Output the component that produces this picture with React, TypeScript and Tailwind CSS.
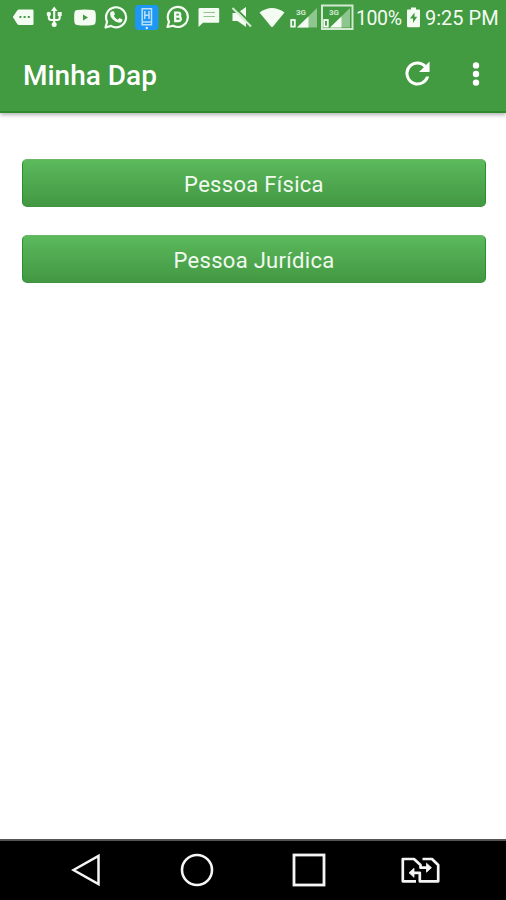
import type { ReactNode } from "react"

interface GlyphProps {
  box: string
  className: string
  children: ReactNode
}

// Every status glyph is drawn on a 36px tall strip, so they share one baseline
function Glyph({ box, className, children }: GlyphProps) {
  return (
    <svg viewBox={box} fill="currentColor" className={`h-9 shrink-0 ${className}`}>
      {children}
    </svg>
  )
}

function StatusBar() {
  return (
    <div className="flex h-9 items-center pl-3 text-[#f4fbf2]">
      {/* Label */}
      <Glyph box="0 0 22 36" className="w-[22px]">
        <path fillRule="evenodd" d="M7 9.5h13.5q1 0 1 1v13.500q0 1-1 1H7q-1 0-1.600-.8L.8 17l4.600-6.700Q6 9.500 7 9.500Zm.400 6.500v2h2v-2Zm4.200 0v2h2v-2Zm4.200 0v2h2v-2Z" />
      </Glyph>
      {/* USB */}
      <Glyph box="0 0 17 36" className="ml-3 w-[17px]">
        <path d="M8.200 6.500 11.500 11H4.900Z" />
        <path d="M8.200 10v15M2.800 14v3.500q0 2.500 2.500 2.500h5.900q2.500 0 2.500-2.500V14" fill="none" stroke="currentColor" strokeWidth="2.100" />
        <circle cx="2.800" cy="14" r="2.200" />
        <path d="M11.700 12h4v4h-4Z" />
        <circle cx="8.200" cy="24.600" r="2.500" />
      </Glyph>
      {/* YouTube */}
      <Glyph box="0 0 22 36" className="ml-[11px] w-[22px]">
        <path fillRule="evenodd" d="M3 10Q11 9 19 10q2.400.2 2.600 2.800.5 4.700 0 9.400-.2 2.600-2.600 2.800-8 1-16 0Q.6 24.800.4 22.200-.1 17.500.4 12.800.6 10.200 3 10Zm6 4.600v5.800l5-2.900Z" />
      </Glyph>
      {/* WhatsApp */}
      <Glyph box="0 0 24 36" className="ml-2 w-6">
        <path d="M1.500 27.500 3.100 21.700A10 10 0 1 1 7 25.900Z" fill="none" stroke="currentColor" strokeWidth="2.200" strokeLinejoin="round" />
        <path d="M8 11.200h1.700l1.300 3-1.200 1.600q1.300 2.700 4 4l1.700-1.800 3 1.500q.1 3-3 3.300-3.500-.2-6.600-3.300-3-3-2.900-6 .400-1.800 2-2.300Z" />
      </Glyph>
      {/* Blue companion app */}
      <Glyph box="0 0 24 36" className="ml-[7px] w-6">
        <rect y="5" width="23.500" height="25" rx="3.500" fill="#1e96f3" />
        <path d="M7.200 8.800h9.300v16H7.200ZM7 22h10M9.800 11v8M14 11v8M9.800 15.300H14" fill="none" stroke="#b9e0fc" strokeWidth="1.500" />
        <circle cx="11.800" cy="28" r="1.200" fill="#d5efff" />
      </Glyph>
      {/* WhatsApp Business */}
      <Glyph box="0 0 24 36" className="ml-[7px] w-6">
        <path d="M1.500 27 3 21.700A10 10 0 1 1 7 25.700Z" fill="none" stroke="currentColor" strokeWidth="2.200" strokeLinejoin="round" />
        <path d="M9.200 12.700h3q2 0 2 1.950T12.200 16.600h-3Zm0 3.900h3.300q2.300 0 2.300 2.200T12.500 21H9.200Z" fill="none" stroke="currentColor" strokeWidth="2.300" />
      </Glyph>
      {/* Message */}
      <Glyph box="0 0 22 36" className="ml-2 w-[22px]">
        <path d="M2 8h18q1.200 0 1.200 1.200v12.300q0 1.300-1.200 1.300H5L.5 27V9.200Q.5 8 2 8Z" />
        <path d="M5.500 12.500h11.500M5.500 16.500h11.500" stroke="#8fc58e" strokeWidth="1.200" />
      </Glyph>
      {/* Muted speaker */}
      <Glyph box="0 0 22 36" className="ml-[11px] w-[22px]">
        <path d="M1.500 13h5L15 7v20l-8.500-6H1.500Z" />
        <path d="m4 7.500 18 18" stroke="#429a41" strokeWidth="1.800" />
        <path d="m1.500 8 18.500 18.500" stroke="#d6ead4" strokeWidth="2" />
      </Glyph>
      {/* Wi-Fi */}
      <Glyph box="0 0 26 36" className="ml-[6px] w-[26px]">
        <path d="M.5 12.500Q13 3.500 25.500 12.500L14 26.500q-1 1-2 0Z" />
      </Glyph>
      {/* SIM 1 */}
      <Glyph box="0 0 28 36" className="ml-[5px] w-7">
        <SignalMark />
      </Glyph>
      {/* SIM 2, active */}
      <Glyph box="-3 0 34 36" className="ml-[2px] w-[34px]">
        <rect x="-1" y="5.500" width="30.500" height="23.500" fill="none" stroke="#d3e9d1" strokeWidth="2" />
        <SignalMark />
      </Glyph>
      <span className="ml-[2px] w-[47px] shrink-0 whitespace-nowrap pt-px text-[19.5px] leading-9 tracking-[-0.4px]">100%</span>
      {/* Charging battery */}
      <Glyph box="0 0 15 36" className="ml-[3px] w-[15px]">
        <path fillRule="evenodd" d="M5 7.500h5v2h3q1 0 1 1V26q0 1.200-1.200 1.200H2.200Q1 27.200 1 26V10.500q0-1 1-1h3Zm3.500 5-4.500 6h3v4.500l4.200-6.200H8.500Z" />
      </Glyph>
      <span className="ml-1 shrink-0 whitespace-nowrap text-[20px] leading-9">9:25 PM</span>
    </div>
  )
}

function SignalMark() {
  return (
    <>
      <path d="M27 8v19.500H7Z" fill="#8fc58e" />
      <path d="M18.500 16.500v11H7Z" />
      <rect x="1.200" y="20" width="3.600" height="6.600" fill="none" stroke="currentColor" strokeWidth="1.800" />
      <text x="6" y="14.500" fontSize="8" fontWeight="700" fill="#d3e9d1">3G</text>
    </>
  )
}

function AppBar() {
  return (
    <div className="flex h-[77px] items-center justify-between border-b-2 border-[#2f8a2e] pl-[23px] pr-[26px] text-white">
      <h1 className="pt-1 text-[28px] font-medium leading-none">Minha Dap</h1>
      <div className="flex items-center gap-[42px]">
        <button type="button" aria-label="Atualizar">
          <svg viewBox="3.700 3.700 16.600 16.600" fill="currentColor" className="size-[25px]">
            <path d="M17.650 6.350A7.960 7.960 0 0 0 12 4a8 8 0 1 0 7.730 10h-2.080A6 6 0 1 1 12 6c1.660 0 3.140.690 4.220 1.780L13 11h7V4z" />
          </svg>
        </button>
        <button type="button" aria-label="Mais opções">
          <svg viewBox="0 0 8 24" fill="currentColor" className="h-6 w-2">
            <circle cx="4" cy="3.400" r="3.200" />
            <circle cx="4" cy="12" r="3.200" />
            <circle cx="4" cy="20.600" r="3.200" />
          </svg>
        </button>
      </div>
    </div>
  )
}

function GreenButton({ label }: { label: string }) {
  return (
    <button
      type="button"
      className="h-12 w-full rounded-[5px] border border-x-[#25922a] border-t-[#6ab76a] border-b-[#409340] bg-linear-to-b from-[#5cb95c] to-[#429842] pt-[3px] text-[22px] leading-none tracking-[0.3px] text-[#f2faf0]"
    >
      {label}
    </button>
  )
}

function NavBar() {
  return (
    <div className="flex h-[61px] items-center border-t-2 border-[#555555] bg-black pb-[2px] pl-[71px] text-[#f5f5f5]">
      <svg viewBox="0 0 30 34" fill="none" stroke="currentColor" strokeWidth="2.500" className="h-[34px] w-[30px]">
        <path d="M2.500 17 27.500 3v28Z" />
      </svg>
      <svg viewBox="0 0 34 34" fill="none" stroke="currentColor" strokeWidth="2.600" className="ml-[79px] size-[34px]">
        <circle cx="17" cy="17" r="15" />
      </svg>
      <svg viewBox="0 0 34 34" fill="none" stroke="currentColor" strokeWidth="2.800" className="ml-[78px] size-[34px]">
        <rect x="2" y="2" width="30" height="30" />
      </svg>
      {/* SIM switch */}
      <svg viewBox="0 0 40 34" fill="none" stroke="currentColor" strokeWidth="2.700" strokeLinejoin="round" className="ml-[74px] h-[34px] w-10">
        <path d="M16 28.300H2.800V6H14l6.500 6v2.700H28M22.500 6h9.500l6.200 6v16.300H19.800v-8.500H12" />
        <path d="M26.500 10.200v9l5-4.500ZM14 15.300v9l-5-4.500Z" fill="currentColor" strokeWidth="0.800" />
      </svg>
    </div>
  )
}

export default function App() {
  return (
    <div className="flex h-[900px] w-[506px] flex-col overflow-hidden bg-white font-['Roboto','Liberation_Sans',sans-serif]">
      <header className="bg-[#429a41] shadow-[0_2px_4px_rgba(0,0,0,0.3)]">
        <StatusBar />
        <AppBar />
      </header>
      <main className="flex flex-1 flex-col gap-7 pl-[22px] pr-5 pt-[46px]">
        <GreenButton label="Pessoa Física" />
        <GreenButton label="Pessoa Jurídica" />
      </main>
      <NavBar />
    </div>
  )
}
